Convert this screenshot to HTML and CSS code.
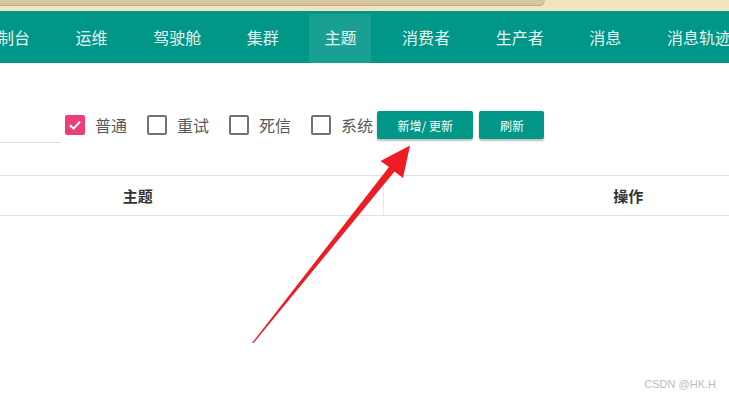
FILE: index.html
```html
<!DOCTYPE html>
<html lang="zh">
<head>
    <meta charset="UTF-8">
    <meta name="viewport" content="width=device-width, initial-scale=1.0">
    <title>主题</title>
    <link rel="stylesheet" href="styles.css">
</head>
<body>
    <div class="browser-strip">
        <div class="browser-tab"></div>
    </div>

    <nav class="nav">
        <ul class="nav-list">
            <li>控制台</li>
            <li>运维</li>
            <li>驾驶舱</li>
            <li>集群</li>
            <li class="active">主题</li>
            <li>消费者</li>
            <li>生产者</li>
            <li>消息</li>
            <li>消息轨迹</li>
        </ul>
    </nav>

    <div class="filters">
        <input class="filter-input" type="text">
        <label class="check checked"><span class="box">
            <svg width="14" height="14" viewBox="0 0 14 14"><path d="M2 7.2 L5.5 10.5 L12 3.8" fill="none" stroke="#fff" stroke-width="2"/></svg>
        </span>普通</label>
        <label class="check"><span class="box"></span>重试</label>
        <label class="check"><span class="box"></span>死信</label>
        <label class="check"><span class="box"></span>系统</label>
        <button class="btn">新增/ 更新</button>
        <button class="btn">刷新</button>
    </div>

    <table class="topic-table">
        <thead>
            <tr>
                <th class="col-topic">主题</th>
                <th>操作</th>
            </tr>
        </thead>
    </table>

    <!-- annotation arrow -->
    <svg class="arrow" width="729" height="395" viewBox="0 0 729 395">
        <polygon points="252,343 389,167 380.5,161 410,145.5 403,178 394.5,171.5 253.5,343" fill="#ee1c25"/>
    </svg>

    <div class="watermark">CSDN @HK.H</div>
</body>
</html>
```

FILE: styles.css
```css
body, html {
    margin: 0;
    padding: 0;
    overflow: hidden;
    background-color: #fff;
    font-family: "Noto Sans CJK SC", "Liberation Sans", sans-serif;
}

.browser-strip {
    height: 11px;
    background-color: #f2e2bd;
}

.browser-tab {
    width: 545px;
    height: 5px;
    background-color: #d5c5a3;
    border-bottom: 1px solid #b9a987;
    border-bottom-right-radius: 8px;
}

.nav {
    height: 52px;
    background-color: #009688;
}

.nav-list {
    display: flex;
    margin: 0 0 0 -33px;
    padding: 0;
    list-style: none;
    white-space: nowrap;
}

.nav-list li {
    padding: 0 15px;
    margin-right: 15.6px;
    height: 52px;
    line-height: 52px;
    font-size: 16px;
    color: #e6f4f1;
}

.nav-list li.active {
    background-color: #1aa092;
    margin-top: 3px;
    height: 49px;
    line-height: 46px;
}

.filters {
    display: flex;
    align-items: center;
    height: 40px;
    margin-top: 42px;
}

.filter-input {
    box-sizing: border-box;
    width: 61px;
    height: 35px;
    margin: 0 4px 0 0;
    border: none;
    border-bottom: 1px solid #ddd;
    outline: none;
}

.check {
    display: flex;
    align-items: center;
    margin-right: 20px;
    font-size: 16px;
    color: #595959;
}

.check:nth-of-type(4) {
    margin-right: 4px;
}

.check .box {
    box-sizing: border-box;
    display: flex;
    align-items: center;
    justify-content: center;
    width: 20px;
    height: 20px;
    margin-right: 10px;
    border: 2px solid #737373;
    border-radius: 2px;
}

.check.checked .box {
    background-color: #ee3d7b;
    border-color: #ee3d7b;
}

.btn {
    height: 28px;
    padding: 0 20.5px;
    margin-right: 6px;
    border: none;
    border-radius: 2px;
    background-color: #009688;
    color: #fff;
    font-family: "Noto Sans CJK SC", "Liberation Sans", sans-serif;
    font-size: 12px;
    box-shadow: 0 2px 2px rgba(0, 0, 0, 0.25);
}

.topic-table {
    width: 980px;
    margin: 30px 0 0 -107px;
    border-collapse: collapse;
}

.topic-table th {
    width: 50%;
    height: 39px;
    padding: 0;
    border-top: 1px solid #e0e0e0;
    border-bottom: 1px solid #e0e0e0;
    font-size: 15px;
    font-weight: bold;
    color: #333;
}

.topic-table th.col-topic {
    border-right: 1px solid #e8e8e8;
}

.arrow {
    position: absolute;
    left: 0;
    top: 0;
}

.watermark {
    position: absolute;
    right: 13px;
    bottom: 5px;
    font-family: "Liberation Sans", sans-serif;
    font-size: 11px;
    color: #bdbdbd;
}
```
